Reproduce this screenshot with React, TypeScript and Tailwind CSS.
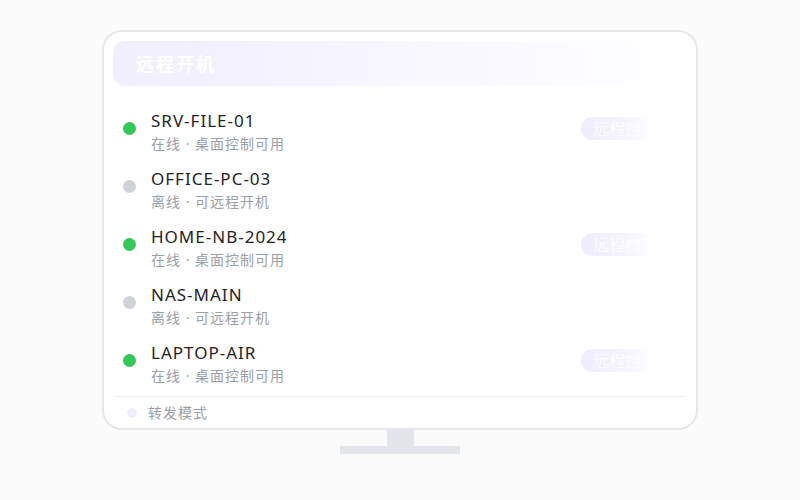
const devices = [
  { name: "SRV-FILE-01", online: true },
  { name: "OFFICE-PC-03", online: false },
  { name: "HOME-NB-2024", online: true },
  { name: "NAS-MAIN", online: false },
  { name: "LAPTOP-AIR", online: true },
];

const cjk = { fontFamily: '"Noto Sans", "Noto Sans CJK SC", sans-serif' };

export default function App() {
  return (
    <div className="flex h-[500px] w-[800px] flex-col items-center bg-[#fbfbfc] pt-[30px]" style={cjk}>
      <div className="flex h-[400px] w-[596px] flex-col rounded-[20px] border-2 border-[#e5e7eb] bg-white px-[9px] pt-[9px]">
        <div className="flex h-[45px] shrink-0 items-center rounded-[12px] bg-gradient-to-r from-[#f1eefe] via-[#f8f6ff] to-white pl-[23px]">
          <span className="text-[18px] font-bold leading-none tracking-[2px] text-white">远程开机</span>
        </div>
        <div className="mt-[18px] flex flex-col">
          {devices.map((d) => (
            <div key={d.name} className="flex h-[58px] items-start pl-[10px] pt-[6px]">
              <span
                className={
                  d.online
                    ? "mt-[12px] h-[13px] w-[13px] shrink-0 rounded-full bg-[#34c759]"
                    : "mt-[12px] h-[13px] w-[13px] shrink-0 rounded-full bg-[#cfd3d9]"
                }
              />
              <div className="ml-[15px] flex flex-col">
                <span className="text-[17px] leading-[22px] tracking-[1px] text-[#1f2329]">{d.name}</span>
                <span className="mt-[2px] text-[14px] leading-[20px] tracking-[1px] text-[#9aa0a8]">
                  {d.online ? "在线 · 桌面控制可用" : "离线 · 可远程开机"}
                </span>
              </div>
              {d.online && (
                <div
                  className="ml-auto mr-[18px] mt-[7px] flex h-[23px] items-center whitespace-nowrap rounded-full bg-gradient-to-r from-[#efecfe] via-[#f7f5ff] via-60% to-white to-80% px-[12px] text-[16px] text-white"
                  style={{ fontFamily: '"Noto Serif CJK SC", "Liberation Serif", serif' }}
                >
                  远程控制
                </div>
              )}
            </div>
          ))}
        </div>
        <div className="mx-[1px] mt-[2px] h-px bg-[#eef0f2]" />
        <div className="flex flex-1 items-center pl-[14px]">
          <span className="h-[10px] w-[10px] rounded-full bg-[#efecfd]" />
          <span className="ml-[11px] text-[14px] tracking-[1px] text-[#9aa0a8]">转发模式</span>
        </div>
      </div>
      <div className="h-[16px] w-[27px] bg-[#e2e5e9]" />
      <div className="h-[8px] w-[120px] bg-[#e2e5e9]" />
    </div>
  );
}
